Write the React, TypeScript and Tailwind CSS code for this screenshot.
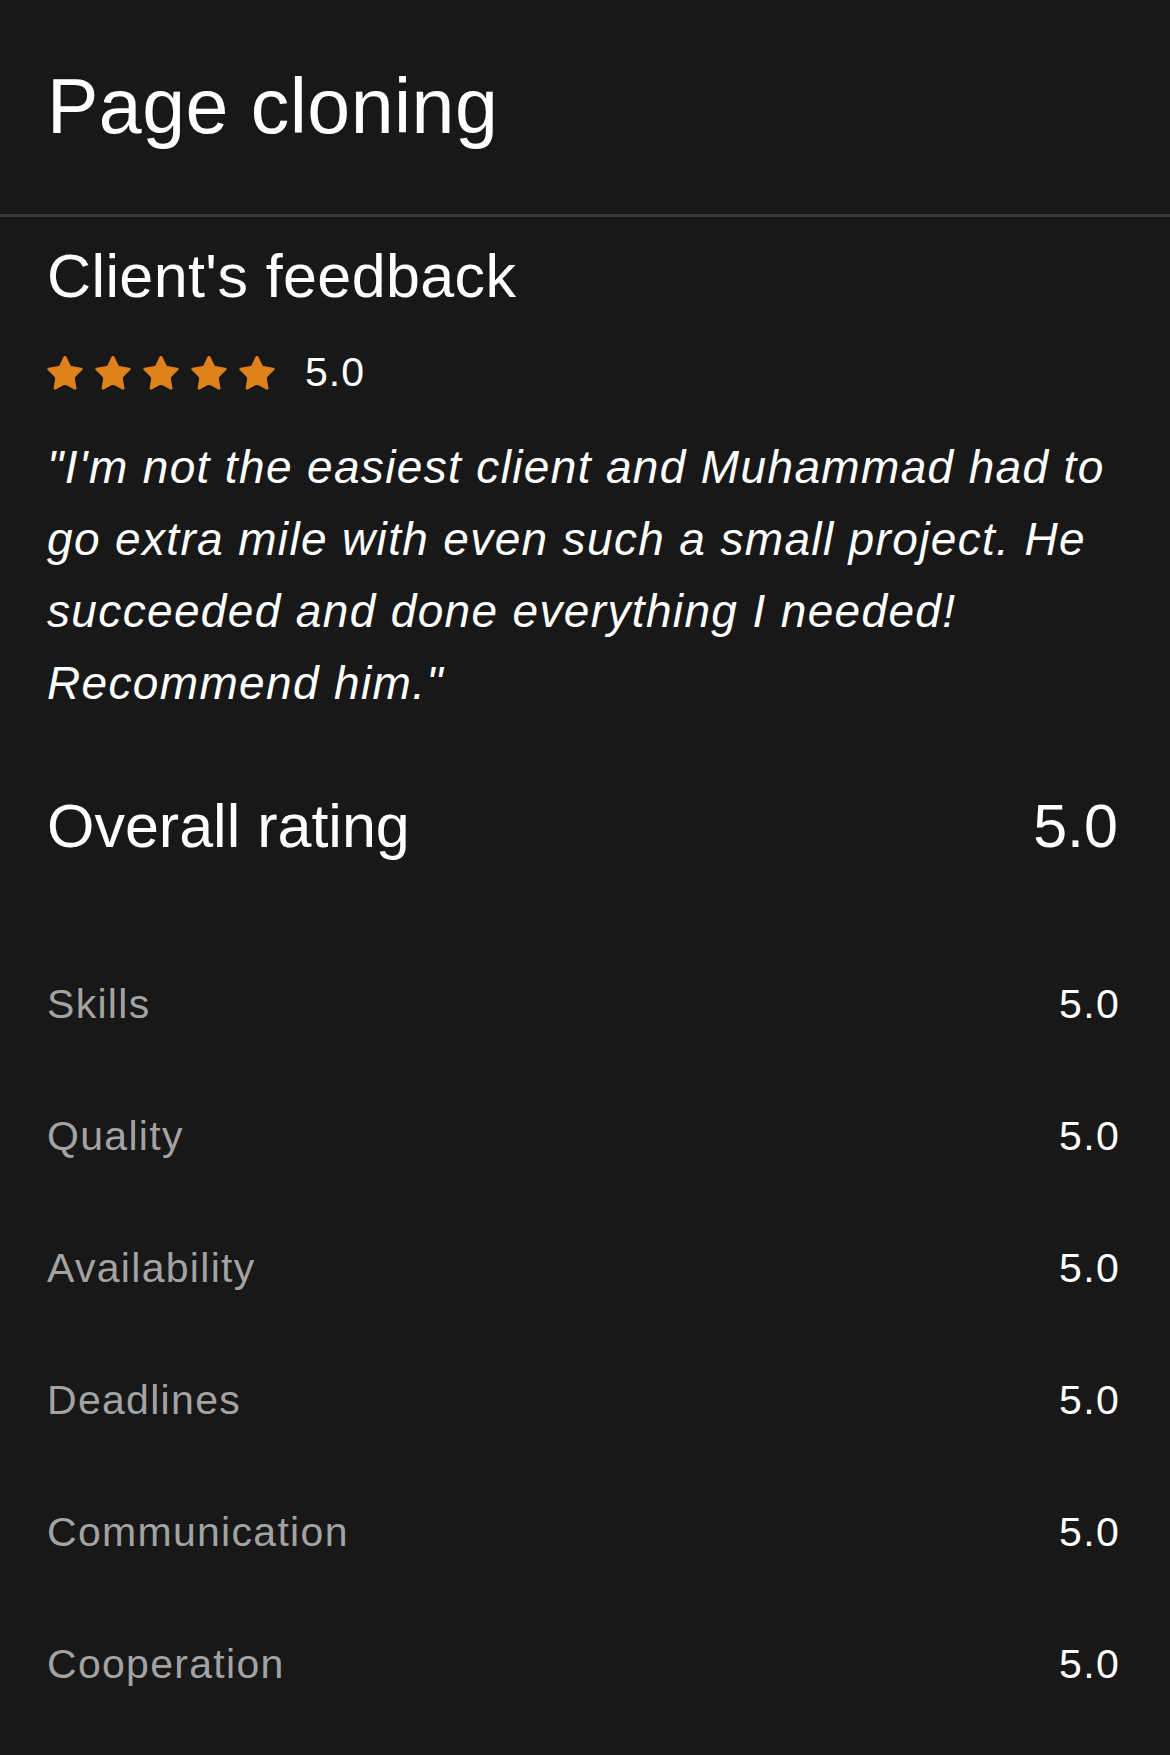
import React from "react";

const STAR_PATH =
  "M11.525 2.295a.53.53 0 0 1 .95 0l2.31 4.679a2.123 2.123 0 0 0 1.595 1.16l5.166.756a.53.53 0 0 1 .294.904l-3.736 3.638a2.123 2.123 0 0 0-.611 1.878l.882 5.14a.53.53 0 0 1-.771.56l-4.618-2.428a2.122 2.122 0 0 0-1.973 0L6.396 21.01a.53.53 0 0 1-.77-.56l.881-5.139a2.122 2.122 0 0 0-.611-1.879L2.16 9.795a.53.53 0 0 1 .294-.906l5.165-.755a2.122 2.122 0 0 0 1.597-1.16z";

function Star() {
  return (
    <svg
      viewBox="1.6 1.8 20.8 19.8"
      className="h-[34px] w-[36px] shrink-0"
      fill="#e0811c"
      stroke="#e0811c"
      strokeWidth={0.6}
      strokeLinejoin="round"
    >
      <path d={STAR_PATH} />
    </svg>
  );
}

const scores = [
  "Skills",
  "Quality",
  "Availability",
  "Deadlines",
  "Communication",
  "Cooperation",
];

export default function App() {
  return (
    <div className="min-h-screen bg-[#181818] text-white font-['Liberation_Sans',Arial,sans-serif]">
      {/* title bar */}
      <div className="h-[214px] pl-[47px] pt-[68px]">
        <h1 className="text-[77px] leading-[77px] font-normal tracking-[0.5px]">
          Page cloning
        </h1>
      </div>
      <div className="h-[3px] bg-[#3a3a3a]" />

      <div className="pl-[47px] pr-[50px]">
        <h2 className="mt-[29px] text-[61px] leading-[61px] font-normal tracking-[0.4px]">
          Client's feedback
        </h2>

        <div className="mt-[45px] flex items-center">
          <div className="flex items-center gap-3">
            <Star />
            <Star />
            <Star />
            <Star />
            <Star />
          </div>
          <span className="ml-[30px] text-[41px] leading-[41px] tracking-[1px]">5.0</span>
        </div>

        <p className="mt-[38px] whitespace-nowrap text-[46px] leading-[72px] italic tracking-[1.35px]">
          "I'm not the easiest client and Muhammad had to
          <br />
          go extra mile with even such a small project. He
          <br />
          succeeded and done everything I needed!
          <br />
          Recommend him."
        </p>

        <div className="mt-[77px] flex items-center justify-between text-[61px] leading-[61px]">
          <span>Overall rating</span>
          <span className="mr-[2px]">5.0</span>
        </div>

        <div className="mt-[81px] flex flex-col">
          {scores.map((label) => (
            <div
              key={label}
              className="flex h-[132px] items-center justify-between text-[41px] leading-[41px] tracking-[1.3px]"
            >
              <span className="text-[#a3a3a3]">{label}</span>
              <span>5.0</span>
            </div>
          ))}
        </div>
      </div>
    </div>
  );
}
